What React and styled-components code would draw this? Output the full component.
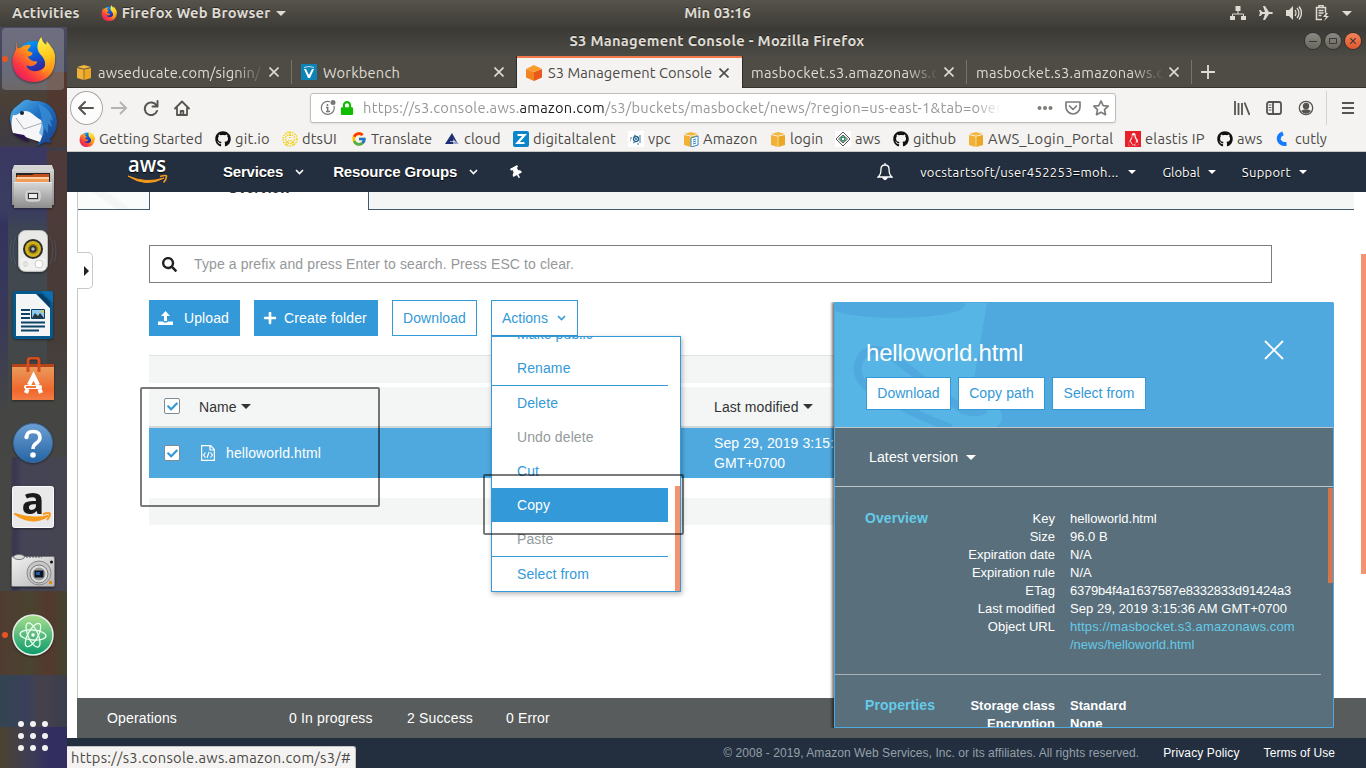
import React from "react";
import styled, { createGlobalStyle, css } from "styled-components";
import {
  FaGithub, FaLock, FaSearch, FaPlus, FaCheck, FaThumbtack, FaLinux,
} from "react-icons/fa";
import { FcGoogle } from "react-icons/fc";

const ubuntu = `Ubuntu, "Noto Sans", "Open Sans", sans-serif`;
const arial = `"Liberation Sans", Arial, sans-serif`;

const Global = createGlobalStyle`
  * { box-sizing: border-box; }
  body { margin: 0; overflow: hidden; font-family: ${arial}; font-size: 14px; }
  svg { display: block; flex: none; }
`;

/* ---------- desktop ---------- */
const Desktop = styled.div`
  width: 1366px; height: 768px; display: flex; flex-direction: column; overflow: hidden;
  background: #fff;
`;
const Panel = styled.header`
  height: 28px; flex: none; display: flex; align-items: flex-start; justify-content: space-between;
  background: linear-gradient(#56534b, #3e3c37);
  color: #dfdbd2; font: bold 14.67px/26px ${ubuntu}; text-shadow: 0 -1px #2b2a27;
`;
const PanelSide = styled.div`
  flex: 1; display: flex; align-items: center; height: 26px; padding-left: 12px; padding-right: 15px;
  justify-content: ${(p) => (p.$end ? "flex-end" : "flex-start")};
  gap: ${(p) => (p.$end ? 12 : 21)}px;
  ${(p) => p.$end && css` padding-right: 14px; `}
`;
const Label = styled.span`
  letter-spacing: ${(p) => p.$ls || 0}px; white-space: nowrap;
`;
const Clock = styled(Label)` padding-left: 68px; `;
const AppMenu = styled.div`
  display: flex; align-items: center; gap: 5px;
`;
const Below = styled.div` flex: 1; min-height: 0; display: flex; `;

const Dock = styled.nav`
  width: 67px; flex: none; display: flex; flex-direction: column; margin-top: -1px; padding-right: 1px;
  background:
    linear-gradient(#3a3862, #3a3d60 80%, transparent) 0 120px / 47px 80px no-repeat,
    linear-gradient(#54382f, #4b3a34) 47px 45px / 20px 75px no-repeat,
    linear-gradient(#4f3a3a, #463c38 70%, #454643) 47px 124px / 20px 260px no-repeat,
    linear-gradient(#33325f, #38395a, #454643) 0 184px / 8px 206px no-repeat,
    linear-gradient(90deg, #464744 10px, #37364f 14px, #444457 22px, #45444f) 0 430px / 67px 134px no-repeat,
    linear-gradient(90deg, #503c31, #4a4330 30px, #54382e 48px, #444430) 0 564px / 67px 84px no-repeat,
    linear-gradient(90deg, #334450, #39405a 26px, #45414c 40px, #3a3e4c) 0 648px / 67px 52px no-repeat,
    linear-gradient(90deg, #4b4331, #3f3d54 30px, #322e60 50px) 0 700px / 67px 41px no-repeat,
    linear-gradient(#4a4a62 0, #43465b 45px, #4b4035 70px, #403c45 115px, #383f5b 150px, #414850 235px, #454643 390px);
`;
const DockItem = styled.div`
  height: 64px; flex: none; display: flex; align-items: center; justify-content: center; position: relative;
  ${(p) => p.$active && css`
    &::before { content: ""; position: absolute; inset: 1px 2px 1px 2px; border-radius: 4px; background: rgba(205,205,205,.28); }
  `}
  ${(p) => p.$running && css`
    &::after { content: ""; position: absolute; left: 2px; top: 29px; width: 6px; height: 6px; border-radius: 50%; background: #e95420; }
  `}
  svg { filter: drop-shadow(0 1px 1px rgba(0,0,0,.45)); z-index: 1; }
`;
const AppsGrid = styled.div`
  margin: auto 0 17px 18px; display: grid; grid-template-columns: repeat(3, 6px); gap: 6px;
  i { width: 6px; height: 6px; border-radius: 50%; background: #f2f2f2; }
`;

/* ---------- browser window ---------- */
const Window = styled.section`
  flex: 1; min-width: 0; display: flex; flex-direction: column; position: relative;
`;
const TitleBar = styled.div`
  height: 28px; flex: none; display: flex; align-items: center; justify-content: flex-end;
  background: linear-gradient(#3b3a36, #4c4a43);
  color: #dfdbd2; font: bold 14.67px/26px ${ubuntu}; text-shadow: 0 -1px #222;
`;
const WindowTitle = styled.div` flex: 1; text-align: center; padding: 0 0 2px 62px; `;
const WindowButtons = styled.div` display: flex; gap: 4px; padding: 0 5px 2px 0; `;
const WindowButton = styled.span`
  width: 16px; height: 16px; border-radius: 50%; display: grid; place-items: center;
  background: ${(p) => (p.$close ? "linear-gradient(#f4825a, #e2562c)" : "linear-gradient(#8b8982, #68665f)")};
  box-shadow: 0 0 0 1px #33322e; color: #3b3934;
`;
const TabStrip = styled.div`
  height: 32px; flex: none; display: flex; background: #4f4c45; color: #dfdbd2;
  box-shadow: inset 0 -1px #33322e; font: 14.67px/31px ${ubuntu};
`;
const Tab = styled.div`
  width: 225px; flex: none; display: flex; align-items: center; position: relative; padding: 0 13px 0 9px;
  ${(p) => p.$rule && css`
    &::after { content: ""; position: absolute; right: 0; top: 4px; width: 1px; height: 24px; background: #77746c; }
  `}
  ${(p) => p.$active && css`
    background: #f4f3f2; color: #4c4a45; border-top: 2px solid #f1784a; box-shadow: -1px 0 #2e2d29, 1px 0 #2e2d29;
    line-height: 26px; padding-bottom: 1px;
  `}
`;
const TabText = styled.span`
  flex: 1; min-width: 0; overflow: hidden; white-space: nowrap; margin-left: ${(p) => (p.$bare ? 0 : 6)}px; margin-right: 5px;
  letter-spacing: ${(p) => p.$ls || 0}px;
  ${(p) => p.$fade && css` mask-image: linear-gradient(90deg, #000 83%, transparent); `}
`;
const NewTab = styled.div` padding: 9px 0 0 9px; `;

const Toolbar = styled.div`
  height: 39px; flex: none; display: flex; align-items: center; padding-left: 3px; background: #f4f3f2; color: #56544f;
`;
const BackButton = styled.span`
  width: 34px; height: 34px; border: 1px solid #a9a7a4; border-radius: 50%; background: #fcfcfc;
  display: grid; place-items: center; margin-right: 8px; padding-right: 1px;
`;
const NavIcons = styled.div` display: flex; gap: 15px; width: 199px; flex: none; `;
const UrlBar = styled.div`
  width: 806px; height: 30px; flex: none; display: flex; align-items: center; padding-left: 9px; background: #fff;
  border: 1px solid #c0bebb; border-radius: 3px; box-shadow: 0 1px 2px rgba(0,0,0,.08);
  font: 14.67px/28px ${ubuntu}; color: #979797;
  b { font-weight: 400; color: #1c1c1c; }
`;
const UrlIcons = styled.div` display: flex; align-items: center; gap: 4px; width: 43px; flex: none; `;
const UrlText = styled.div`
  width: 638px; flex: none; overflow: hidden; white-space: nowrap; letter-spacing: ${(p) => p.$ls}px;
  mask-image: linear-gradient(90deg, #000 96%, transparent);
`;
const UrlActions = styled.div` display: flex; gap: 12px; align-items: center; margin-left: 36px; color: #7d7c79; `;
const ToolIcons = styled.div`
  display: flex; gap: 16px; align-items: center; margin-left: 118px; height: 34px; padding-right: 12px; border-right: 1px solid #d5d3d0;
`;
const Bookmarks = styled.div`
  height: 25px; flex: none; display: flex; padding: 0 0 0 12px; background: #f4f3f2; border-bottom: 1px solid #c9c7c4;
  font: 14.67px/24px ${ubuntu}; color: #4c4a45;
`;
const Bookmark = styled.div`
  width: ${(p) => p.$w}px; flex: none; display: flex; align-items: center; gap: 4px; letter-spacing: ${(p) => p.$ls || 0}px;
  white-space: nowrap;
`;

/* ---------- AWS console ---------- */
const AwsNav = styled.nav`
  height: 40px; flex: none; display: flex; align-items: center; background: #232f3e; color: #fff;
  padding: 0 59px 0 60px; text-shadow: 0 1px 1px #000;
`;
const AwsLink = styled.span`
  display: flex; align-items: center; white-space: nowrap; gap: ${(p) => p.$gap || 12}px; margin-left: ${(p) => p.$ml}px;
  font: ${(p) => (p.$small ? `13px/42px ${ubuntu}` : `bold 15px/40px ${arial}`)}; letter-spacing: ${(p) => p.$ls || 0}px;
`;
const Account = styled(AwsLink)` margin-left: auto; `;
const Pin = styled(FaThumbtack)` transform: rotate(-28deg); `;
const Caret = styled.i`
  width: 0; height: 0; border: ${(p) => p.$s || 4}px solid transparent; border-top-color: currentColor; border-bottom: 0; flex: none;
`;
const Main = styled.main`
  height: 506px; flex: none; margin-left: 10px; border-left: 1px solid #c5c9c9; position: relative; background: #fff;
`;
const ConsoleTabs = styled.div` height: 18px; display: flex; margin-right: 12px; `;
const TabFiller = styled.div`
  width: ${(p) => (p.$w ? p.$w + "px" : "auto")}; flex: ${(p) => (p.$w ? "none" : 1)};
  background: ${(p) => (p.$w ? "linear-gradient(35deg, #fafbfb 40%, #f4f6f6 41%, #f4f6f6 55%, #fafbfb 56%)" : "#f4f6f6")};
  border-bottom: 1px solid #44596b;
`;
const ActiveTab = styled.div`
  width: 220px; overflow: hidden; text-align: center; font: bold 14px/16px ${arial}; color: #333;
  border: 1px solid #44596b; border-width: 0 1px; letter-spacing: .1px;
  span { display: block; margin-top: -12px; }
`;
const Drawer = styled.div`
  position: absolute; left: -1px; top: 60px; width: 16px; height: 37px; background: #fff;
  border: 1px solid #c5c9c9; border-left: 0; border-radius: 0 5px 5px 0; display: flex; align-items: center; padding-left: 7px;
  &::before { content: ""; border: 5px solid transparent; border-left: 5px solid #222; border-right: 0; }
`;
const Browser = styled.div` width: 1123px; margin: 35px 0 0 71px; `;
const Search = styled.div`
  height: 38px; border: 1px solid #7b7d7d; display: flex; align-items: center; gap: 17px; padding-left: 12px;
  color: #95989a; font-size: 14px; letter-spacing: .11px;
  svg { color: #222; }
`;
const Actions = styled.div` display: flex; gap: 14px; margin-top: 17px; `;
const Button = styled.div`
  height: ${(p) => p.$h || 36}px; width: ${(p) => p.$w}px; display: flex; align-items: center; white-space: nowrap; position: relative;
  border: 1px solid #3399d8; font-size: 14px; letter-spacing: ${(p) => p.$ls || 0}px; line-height: 16px;
  padding-left: ${(p) => p.$pl || 0}px; gap: ${(p) => p.$gap || 0}px; justify-content: ${(p) => (p.$pl ? "flex-start" : "center")};
  padding-bottom: ${(p) => (p.$h ? 2 : 0)}px;
  background: ${(p) => (p.$primary ? "#3399d8" : "#fff")}; color: ${(p) => (p.$primary ? "#fff" : "#3399d8")};
`;
const Menu = styled.div`
  position: absolute; left: -1px; top: 35px; width: 190px; height: 256px; overflow: hidden; z-index: 3;
  background: #fff; border: 1px solid #3399d8; box-shadow: 1px 2px 5px rgba(0,0,0,.3);
  &::after { content: ""; position: absolute; right: 0; bottom: 0; width: 5px; height: 105px; background: #f4936f; }
`;
const MenuList = styled.div` width: 176px; margin-top: -20px; `;
const MenuItem = styled.div`
  height: 34px; line-height: 34px; padding-left: 25px; letter-spacing: .1px;
  color: ${(p) => (p.$off ? "#949a9c" : p.$on ? "#fff" : "#3399d8")};
  background: ${(p) => (p.$on ? "#3399d8" : "transparent")};
`;
const MenuRule = styled.div` height: 1px; background: #3399d8; `;
const Band = styled.div`
  height: ${(p) => p.$h}px; margin-top: ${(p) => p.$mt}px; background: #f4f6f6; border-top: ${(p) => (p.$line ? "1px solid #dfe3e3" : 0)};
`;
const Row = styled.div`
  display: grid; grid-template-columns: 35px 515px 1fr; align-items: center; padding-left: 15px;
  ${(p) => p.$head
    ? css` height: 41px; margin-top: 4px; background: #f4f6f6; border-bottom: 2px solid #d3d8d8; color: #333; `
    : css` height: 50px; background: #4fa9de; color: #fff; line-height: 20px; `}
`;
const Cell = styled.div` display: flex; align-items: center; gap: ${(p) => p.$gap || 4}px; letter-spacing: .1px; padding-left: ${(p) => p.$pl || 0}px; `;
const Check = styled.span`
  width: 16px; height: 16px; background: #fff; border: 1px solid #7f8b93; border-radius: 2px; display: grid; place-items: center; color: #3399d8;
  margin-top: ${(p) => p.$up || 0}px;
`;
const Operations = styled.div`
  height: 40px; flex: none; margin-left: 10px; background: #585c5c; color: #fff; display: flex; align-items: center;
  font-size: 14px; padding-left: 30px; letter-spacing: .15px;
  span { white-space: nowrap; }
  span:nth-child(1) { width: 182px; } span:nth-child(2) { width: 118px; } span:nth-child(3) { width: 99px; }
`;
const Footer = styled.footer`
  height: 30px; flex: none; background: #232f3e; display: flex; align-items: center; justify-content: flex-end; gap: 24px;
  padding: 0 31px 0 31px; color: #95a0aa; font-size: 12px; letter-spacing: .06px;
  b { font-weight: 400; color: #fff; }
  b:nth-of-type(1) { letter-spacing: .12px; }
`;
const FooterIcons = styled.div` margin-right: auto; display: flex; gap: 100px; padding-top: 1px; `;
const StatusTip = styled.div`
  position: absolute; left: 0; bottom: 0; height: 22px; width: 289px; padding-left: 4px; background: #f4f3f2; white-space: nowrap;
  border: 1px solid #c5c3c0; border-width: 1px 1px 0 0; border-radius: 0 3px 0 0; font: 14.67px/22px ${ubuntu}; color: #4c4a45; letter-spacing: ${(p) => p.$ls}px;
`;
const PageThumb = styled.div` position: absolute; right: 0; top: 226px; width: 5px; height: 320px; background: #f4936f; `;

/* ---------- details panel ---------- */
const Details = styled.aside`
  position: absolute; left: 767px; top: 274px; width: 500px; height: 426px; z-index: 4;
  border: 1px solid #4fa9de; border-radius: 0 2px 0 0; background: #596f7c; color: #fff; box-shadow: -1px 1px 3px 1px rgba(0,0,0,.55);
  clip-path: inset(0 0 0 -6px);
`;
const DetailsHead = styled.div`
  height: 125px; padding: 37px 49px 0 31px; background: #4fa9de; border-bottom: 1px solid #bfc5c8; position: relative; overflow: hidden;
`;
const Bucket = styled.svg` position: absolute; left: 0; top: 0; `;
const TitleLine = styled.div`
  position: relative; display: flex; justify-content: space-between; font-size: 24px; line-height: 26px; height: 37px; letter-spacing: -.2px;
`;
const HeadButtons = styled.div` position: relative; display: flex; gap: 7px; `;
const Version = styled.div`
  height: 59px; border-bottom: 1px solid #bfc5c8; display: flex; align-items: center; gap: 8px; padding-left: 34px; font-size: 14px; letter-spacing: .14px;
`;
const DetailsBody = styled.div`
  height: 240px; overflow: hidden; position: relative; padding-right: 12px;
  &::after { content: ""; position: absolute; right: 0; top: 1px; width: 5px; height: 95px; background: #d3754e; }
`;
const Section = styled.div`
  display: grid; grid-template-columns: 190px 1fr; column-gap: 15px; padding: ${(p) => (p.$bold ? 22 : 23)}px 0 0 30px; height: ${(p) => p.$h}px;
  border-bottom: 1px solid #aab2b5; font: ${(p) => (p.$bold ? "bold " : "")}13px/18px ${arial};
`;
const SectionTitle = styled.h3`
  margin: -1px 0 0; font: bold 14px/18px ${arial}; color: #63cbe8; letter-spacing: .08px; grid-column: 1; grid-row: 1;
`;
const Keys = styled.div` grid-column: 1; grid-row: 1; text-align: right; `;
const Value = styled.div` white-space: nowrap; letter-spacing: ${(p) => p.$ls || 0}px; color: ${(p) => (p.$link ? "#63cbe8" : "inherit")}; `;

const Annotation = styled.div`
  position: absolute; left: ${(p) => p.$x}px; top: ${(p) => p.$y}px; width: ${(p) => p.$w}px; height: ${(p) => p.$h}px;
  border: 2px solid rgba(0,0,0,.52); border-radius: 2px; z-index: 10;
`;

/* ---------- drawings ---------- */
const Firefox = ({ size = 16 }) => {
  const id = React.useId();
  return (
    <svg width={size} height={size} viewBox="0 0 46 46">
      <defs>
        <linearGradient id={id + "a"} x1="1" y1="0" x2=".1" y2="1"><stop offset="0" stopColor="#ffd83b" /><stop offset=".45" stopColor="#ff9417" /><stop offset=".75" stopColor="#fb3643" /><stop offset="1" stopColor="#e0126e" /></linearGradient>
        <linearGradient id={id + "b"} x1="0" y1="0" x2=".4" y2="1"><stop offset="0" stopColor="#00aeff" /><stop offset=".5" stopColor="#0a62df" /><stop offset="1" stopColor="#33229a" /></linearGradient>
        <linearGradient id={id + "c"} x1=".3" y1="0" x2=".5" y2="1"><stop offset="0" stopColor="#fff44b" /><stop offset=".6" stopColor="#ffc41d" /><stop offset="1" stopColor="#ff8a16" /></linearGradient>
      </defs>
      <circle cx="23" cy="21" r="17" fill={`url(#${id}b)`} />
      <path d="M6 5c-1 4 0 6-2 10C-2 26 3 46 23 46c14 0 22-10 22-23-1-7-4-10-7-13 2 9 0 17-5 22-4 3-9 4-13 2-3-1-4-3-4-5 4 2 8 0 10-2 1-1 0-3-1-2-4 0-6-2-8-5 3 0 5-2 5-4l-5-2c0-2 3-3 3-6-6 0-8 1-10 3-1 0-2 0-3 1-1-2-1-4-1-7z" fill={`url(#${id}a)`} />
      <path d="M31 0c-6 8-5 14 1 20 4 5 4 11-1 17 10-4 15-12 14-18-1-7-4-8-6-12-1-1-2-2-2-3-1 2-1 3-1 4-3-2-4-4-5-8z" fill={`url(#${id}c)`} />
    </svg>
  );
};
const Thunderbird = () => (
  <svg width="50" height="50" viewBox="0 0 50 50">
    <defs><linearGradient id="tb" x1="0" y1="0" x2="1" y2="1"><stop offset="0" stopColor="#58b7ec" /><stop offset=".45" stopColor="#1f6fc4" /><stop offset="1" stopColor="#183f86" /></linearGradient></defs>
    <path d="M15 3c5-3 8 0 11 0 14-1 23 9 23 21 0 7-3 13-7 17l1 4-6-1-8 4 3-8L6 32C0 24 1 13 9 8c3-2 4-4 6-5z" fill="url(#tb)" />
    <path d="M5 17c5 1 8-4 12-4 6 0 9 5 16 9 4 8 2 15-1 22L5 35c-2-5-2-12 0-18z" fill="#f6f6f8" />
    <path d="m8 20 8 11 18-6" stroke="#a9a9b4" strokeWidth="1" fill="none" />
    <path d="M30 6c8 2 14 9 15 17l-3-2 2 8-4-3 0 9-4-5-1 9-4-4c4-9 3-18-1-29z" fill="#3f95dc" opacity=".65" />
    <path d="M5 35c5 5 10 7 17 9l-6-7z" fill="#2a164d" /><circle cx="14" cy="15" r="2" fill="#123" />
  </svg>
);
const Cabinet = () => (
  <svg width="42" height="46" viewBox="0 0 42 46">
    <defs><linearGradient id="cb" x1="0" y1="0" x2="0" y2="1"><stop offset="0" stopColor="#d8d8d8" /><stop offset="1" stopColor="#8d8d8d" /></linearGradient></defs>
    <path d="M2 1h38l2 6v34H0V7z" fill="url(#cb)" /><path d="M0 6h42" stroke="#ddd" />
    <path d="M4 9h34v10H4z" fill="#262626" /><path d="m5 11 15 0 2-1h15v9H5z" fill="#c3511d" /><path d="M4 13h33v6H4z" fill="#f09b57" /><path d="M5 14h32" stroke="#ffe7c9" strokeWidth="1.4" />
    <path d="M2 18h38v26H2z" fill="url(#cb)" /><path d="M2 18.500h38" stroke="#e9e9e9" />
    <rect x="14" y="27" width="14" height="10" rx="2.500" fill="#bcbcbc" stroke="#e6e6e6" /><rect x="16.500" y="29.500" width="9" height="5" fill="#eee" stroke="#333" />
  </svg>
);
const Speaker = () => (
  <svg width="48" height="46" viewBox="0 0 48 46">
    <path d="M7 9q-6 12 0 28M3 12q-4 10 0 22M41 9q6 12 0 28M45 12q4 10 0 22" stroke="#64758d" opacity=".4" fill="none" />
    <rect x="9.500" y="2.500" width="29" height="41" rx="7" fill="#e9e9e7" stroke="#bdbdbb" /><path d="M11 30h26l-1 12H12z" fill="#f7f7f7" opacity=".6" />
    <circle cx="24" cy="21" r="10" fill="#2c2c2c" /><circle cx="24" cy="21" r="8" fill="#d2b11f" /><circle cx="24" cy="21" r="5" fill="#917811" /><circle cx="24" cy="21" r="3.500" fill="#333" /><circle cx="24" cy="21" r="1.700" fill="#bbb" />
    <circle cx="30" cy="36" r="4" fill="#fff" stroke="#ccc" /><path d="M15 34h3v4h-3z" fill="none" stroke="#ccc" />
  </svg>
);
const Writer = () => (
  <svg width="40" height="48" viewBox="0 0 40 48">
    <path d="M3 0h37v45q0 3-3 3H3q-3 0-3-3V3q0-3 3-3z" fill="#04598f" /><path d="M28 0h9q3 0 3 3v9z" fill="#0b6dae" />
    <path d="M3 3h20l14 14v28H3z" fill="#f4f5f6" /><path d="M24 3l13 14V11L29 3z" fill="#083e66" />
    <path d="M8 19h9M8 23h9M8 27h9M8 31.500h24M8 35.500h24M8 39.500h18" stroke="#0c4266" strokeWidth="2" />
    <path d="M18.500 18.500h13v9h-13z" fill="#8fc9ee" stroke="#0c4266" /><path d="m19 27 3-5 3 3 2-3 4 5z" fill="#263743" /><circle cx="29.500" cy="20.500" r="1.500" fill="#e8c33e" />
  </svg>
);
const Store = () => (
  <svg width="42" height="44" viewBox="0 0 42 44">
    <defs><linearGradient id="st" x1="0" y1="0" x2="0" y2="1"><stop offset="0" stopColor="#e99a5b" /><stop offset=".7" stopColor="#f1672c" /><stop offset="1" stopColor="#f37d45" /></linearGradient></defs>
    <path d="M0 7h42v4H0z" fill="#b7431a" /><path d="M0 10h42v33H0z" fill="url(#st)" />
    <path d="M16 15V4q0-3 3-3h5q3 0 3 3v11" fill="none" stroke="#d64c1c" strokeWidth="3" />
    <path d="m14 36 1.500-4M29 36l-1.500-4M17 28l4.500-9L26 28" fill="none" stroke="#fff" strokeWidth="4.200" /><rect x="12" y="28" width="18" height="4" rx="2" fill="#fff" /><path d="M14 30h10" stroke="#f1672c" strokeWidth="1.800" />
  </svg>
);
const Help = () => (
  <svg width="42" height="42" viewBox="0 0 42 42">
    <defs><linearGradient id="hp" x1="0" y1="0" x2="0" y2="1"><stop offset="0" stopColor="#6d9fd4" /><stop offset="1" stopColor="#2565a4" /></linearGradient></defs>
    <circle cx="21" cy="21" r="19.500" fill="url(#hp)" stroke="#3b6ea3" /><path d="M14.500 15.500q0-6 6.500-6 7 0 7 6 0 3-3.500 5.500T21 27" fill="none" stroke="#fff" strokeWidth="3.500" /><circle cx="14.500" cy="15" r="2.200" fill="#fff" /><circle cx="21" cy="33" r="2.800" fill="#fff" />
  </svg>
);
const Amazon = () => (
  <svg width="42" height="42" viewBox="0 0 42 42">
    <rect x=".5" y=".5" width="41" height="41" rx="2" fill="#e9e9e9" stroke="#fafafa" />
    <text x="21" y="28" textAnchor="middle" fontFamily="Open Sans, sans-serif" fontWeight="700" fontSize="38" fill="#1b1b1b">a</text>
    <path d="M3 28q17 12 33 2-15 4-33-2z" fill="#f79a1c" stroke="#f79a1c" strokeWidth="2" strokeLinejoin="round" /><path d="M31 28q7-2 7 0 0 3-3 6" fill="none" stroke="#f79a1c" strokeWidth="2" />
  </svg>
);
const Camera = () => (
  <svg width="44" height="34" viewBox="0 0 44 34">
    <defs><linearGradient id="cm" x1="0" y1="0" x2="1" y2="1"><stop offset="0" stopColor="#f2f2f2" /><stop offset="1" stopColor="#b4b4b4" /></linearGradient></defs>
    <rect x=".5" y="2.500" width="43" height="30" rx="1.500" fill="url(#cm)" stroke="#777" /><ellipse cx="8" cy="3" rx="5.500" ry="2.500" fill="#ddd" stroke="#777" /><path d="M15 3h16" stroke="#555" strokeDasharray="2 1" />
    <circle cx="28" cy="19" r="12" fill="#c7c7c7" stroke="#888" /><circle cx="28" cy="20" r="9" fill="#ddd" stroke="#777" /><circle cx="28" cy="20" r="6.500" fill="#999" /><rect x="23.500" y="16.500" width="9" height="7" fill="#0b1526" /><path d="M25 18h4v3h-4z" fill="#1d5ba4" />
    <circle cx="40.500" cy="8" r="1.500" fill="#111" /><path d="M38 27h3v3h-3z" fill="#e28a14" />
  </svg>
);
const Atom = () => (
  <svg width="42" height="42" viewBox="0 0 42 42">
    <defs><linearGradient id="at" x1="0" y1="0" x2="0" y2="1"><stop offset="0" stopColor="#a9de8d" /><stop offset="1" stopColor="#0a9a6c" /></linearGradient></defs>
    <circle cx="21" cy="21" r="20" fill="url(#at)" stroke="#e3efe6" strokeWidth="1.600" />
    <g fill="none" stroke="#eafff0" strokeWidth="1.300"><ellipse cx="21" cy="21" rx="13" ry="5" transform="rotate(5 21 21)" /><ellipse cx="21" cy="21" rx="13" ry="5" transform="rotate(66 21 21)" /><ellipse cx="21" cy="21" rx="13" ry="5" transform="rotate(119 21 21)" /></g><circle cx="21" cy="21" r="1.700" fill="#fff" />
  </svg>
);
const Cube = ({ page }) => (
  <svg width="16" height="16" viewBox="0 0 16 16">
    <path d="M1 4l6.700 1.500V16L1 14z" fill="#f2b035" /><path d="m15 4-6.700 1.500V16l6.700-2z" fill="#eca723" /><path d="m1 3 7-2 7 2-7 1.700z" fill="#f4b840" />
    {page && <><path d="M8 7l7-2v9l-7 2z" fill="#fff" stroke="#2f86c4" /><path d="m10 9 3-1M10 11l3-1M10 13l3-1" stroke="#2f86c4" /></>}
  </svg>
);
const S3Cube = () => (
  <svg width="16" height="16" viewBox="0 0 16 16"><path d="M0 4l8 3v9l-8-3.500z" fill="#f58220" /><path d="m16 4-8 3v9l8-3.500z" fill="#e8591c" /><path d="m0 4 8-4 8 4-8 3z" fill="#fb9b2b" /></svg>
);
const Workbench = () => (
  <svg width="16" height="16" viewBox="0 0 16 16"><path d="M0 0h16v16H0z" fill="#0d84b5" /><path d="m3 5 2 0 3 6 3-6h2l-4 9H7z" fill="#fff" /><path d="M3 3.500q5-2 10 0" stroke="#bfe3f2" fill="none" /></svg>
);
const Dots = () => (
  <svg width="16" height="16" viewBox="0 0 16 16" fill="none" stroke="#f2d21c" strokeDasharray="1.500 1"><circle cx="8" cy="8" r="7" strokeWidth="1.500" /><circle cx="8" cy="8" r="4.500" strokeWidth="1.500" /><path d="M8 1v6M4 14l3-5M12 14 9 9" strokeWidth="2" /></svg>
);
const Cloud = () => (
  <svg width="16" height="16" viewBox="0 0 16 16"><path d="M1 13 8 2l6 11z" fill="#1d2f70" /><path d="M9 8l6 5H9z" fill="#9aa5cc" /><path d="M6 10h5v1H6z" fill="#fff" opacity=".6" /></svg>
);
const Zed = () => (
  <svg width="16" height="16" viewBox="0 0 16 16"><rect width="16" height="16" rx="2" fill="#0b86c8" /><path d="M4.500 4h7l-7 8h7" fill="none" stroke="#fff" strokeWidth="2.200" /></svg>
);
const Vpc = () => (
  <svg width="16" height="16" viewBox="0 0 16 16"><path d="M0 0h16v16H0z" fill="#fff" /><circle cx="8" cy="8" r="2.500" fill="none" stroke="#1f5f86" strokeWidth="1.300" /><circle cx="8" cy="8" r="1" fill="#1f5f86" /><path d="M2 7h2M2 9h1M12 4v8M5 12l2-1M6 4l2 1M10 12v2" stroke="#3a7da3" /></svg>
);
const Diamond = () => (
  <svg width="16" height="16" viewBox="0 0 16 16"><path d="M0 0h16v16H0z" fill="#fff" /><path d="m8 1 7 7-7 7-7-7zM8 4l4.500 4L8 12 3.500 8z" fill="none" stroke="#555" /><circle cx="8" cy="8" r="2" fill="none" stroke="#2b8a5b" strokeWidth="1.500" /></svg>
);
const Tux = styled.span` width: 16px; height: 16px; flex: none; background: #e7202b; color: #fff; display: grid; place-items: center; `;
const Cutly = () => (
  <svg width="16" height="16" viewBox="0 0 16 16"><path d="M8 2.300Q3.500 4 3.800 8.200 4.500 13.300 11.500 13" fill="none" stroke="#147aff" strokeWidth="4" /></svg>
);
const X = ({ s = 10, w = 1.6, c = "currentColor" }) => (
  <svg width={s} height={s} viewBox="0 0 10 10"><path d="m.5.5 9 9m0-9-9 9" stroke={c} strokeWidth={w} /></svg>
);
const Chevron = () => (
  <svg width="9" height="6" viewBox="0 0 9 6"><path d="m1 1 3.500 3.500L8 1" fill="none" stroke="currentColor" strokeWidth="1.600" /></svg>
);
const AwsLogo = () => (
  <svg width="42" height="28" viewBox="0 0 42 28">
    <text x="1" y="14" fontFamily="Open Sans, sans-serif" fontWeight="600" fontSize="21" fill="#fff" textLength="38" lengthAdjust="spacingAndGlyphs">aws</text>
    <path d="M1 18q18 12 36 2-18 6-36-2z" fill="#f79a1c" stroke="#f79a1c" strokeLinejoin="round" /><path d="M33 18.500q7-2 6.500 0 0 3-3 6" fill="none" stroke="#f79a1c" strokeWidth="1.600" />
  </svg>
);
const Glyph = ({ children, w = 16, sw = 2 }) => (
  <svg width={w} height={w} viewBox="0 0 16 16" fill="none" stroke="currentColor" strokeWidth={sw} strokeLinecap="round" strokeLinejoin="round">{children}</svg>
);

const bookmarks = [
  ["Getting Started", 136, <Firefox />, 0.12], ["git.io", 67, <FaGithub size={16} color="#111" />, 0.2], ["dtsUI", 69, <Dots />, 0.1],
  ["Translate", 93, <FcGoogle size={16} />, 0.06], ["cloud", 69, <Cloud />, 0.1], ["digitaltalent", 115, <Zed />, 0.18], ["vpc", 55, <Vpc />, 0],
  ["Amazon", 87, <Cube page />, 0.2], ["login", 65, <Cube />, 0.1], ["aws", 58, <Diamond />, 0], ["github", 75, <FaGithub size={16} color="#111" />, 0],
  ["AWS_Login_Portal", 157, <Cube />, 0.26], ["elastis IP", 92, <Tux><FaLinux size={13} /></Tux>, 0.24], ["aws", 58, <FaGithub size={16} color="#111" />, 0], ["cutly", 60, <Cutly />, 0],
];

export default function App() {
  return (
    <Desktop>
      <Global />
      <Panel>
        <PanelSide>
          <Label $ls={0.25}>Activities</Label>
          <AppMenu><Firefox /><Label $ls={0.26}>Firefox Web Browser</Label><Caret $s={5} /></AppMenu>
        </PanelSide>
        <Clock $ls={0.1}>Min 03:16</Clock>
        <PanelSide $end>
          <svg width="16" height="16" viewBox="0 0 16 16" fill="#dfdbd2"><path d="M5.500 1h5v5h-5zM0 11h5v4H0zM11 11h5v4h-5z" /><path d="M8 6v3M2.500 11V9h11v2" fill="none" stroke="#dfdbd2" /></svg>
          <svg width="16" height="16" viewBox="0 0 16 16" fill="#dfdbd2"><path d="M1 5h1.500l2 2H7L5 1h2l4 6h3q2 1 0 2h-3l-4 6H5l2-6H4.500l-2 2H1l1-3z" /></svg>
          <svg width="16" height="16" viewBox="0 0 16 16" fill="#dfdbd2"><path d="M0 5h3l4-4v14l-4-4H0z" /><path d="M9 5q2 3 0 6M11 3q4 5 0 10M13 1.500q5 6.500 0 13" fill="none" stroke="#dfdbd2" strokeWidth="1.300" /></svg>
          <svg width="16" height="16" viewBox="0 0 16 16" fill="none" stroke="#dfdbd2"><path d="M8 14.500H2.500v-12h9V8M5 2V.5h4V2M4.500 5.500h5M4.500 8h5M4.500 10.500h3" strokeWidth="1.500" /><path d="m12 8-3 4h3l-2 4 5-5h-3l2-3z" fill="#dfdbd2" stroke="none" /></svg>
          <Caret $s={5} />
        </PanelSide>
      </Panel>
      <Below>
        <Dock>
          <DockItem $active $running><Firefox size={45} /></DockItem>
          <DockItem><Thunderbird /></DockItem>
          <DockItem><Cabinet /></DockItem>
          <DockItem><Speaker /></DockItem>
          <DockItem><Writer /></DockItem>
          <DockItem><Store /></DockItem>
          <DockItem><Help /></DockItem>
          <DockItem><Amazon /></DockItem>
          <DockItem><Camera /></DockItem>
          <DockItem $running><Atom /></DockItem>
          <AppsGrid>{Array.from({ length: 9 }, (_, i) => <i key={i} />)}</AppsGrid>
        </Dock>
        <Window>
          <TitleBar>
            <WindowTitle><Label $ls={0.29}>S3 Management Console - Mozilla Firefox</Label></WindowTitle>
            <WindowButtons>
              <WindowButton><svg width="8" height="8"><path d="M0 4.500h8" stroke="currentColor" /></svg></WindowButton>
              <WindowButton><svg width="8" height="8"><path d="M.5 1.500h7v5h-7z" fill="none" stroke="currentColor" /></svg></WindowButton>
              <WindowButton $close><X s={6} w={2} /></WindowButton>
            </WindowButtons>
          </TitleBar>
          <TabStrip>
            <Tab $rule><Cube /><TabText $fade $ls={0.15}>awseducate.com/signin/</TabText><X /></Tab>
            <Tab><Workbench /><TabText $ls={0.22}>Workbench</TabText><X /></Tab>
            <Tab $active><S3Cube /><TabText $ls={0.05}>S3 Management Console</TabText><X /></Tab>
            <Tab $rule><TabText $bare $fade $ls={0.3}>masbocket.s3.amazonaws.com</TabText><X /></Tab>
            <Tab $rule><TabText $bare $fade $ls={0.3}>masbocket.s3.amazonaws.com</TabText><X /></Tab>
            <NewTab><svg width="14" height="14"><path d="M7 0v14M0 7h14" stroke="#dfdbd2" strokeWidth="1.800" /></svg></NewTab>
          </TabStrip>
          <Toolbar>
            <BackButton><Glyph><path d="M15 8H1.500M7 2 1 8l6 6" /></Glyph></BackButton>
            <NavIcons>
              <svg width="17" height="16" viewBox="0 0 17 16" fill="none" stroke="#b6b4b1" strokeWidth="2"><path d="M0 8h15M9 2l6 6-6 6" /></svg>
              <Glyph><path d="M13.500 5.500A6.300 6.300 0 1 0 14 11M14.500 1v5.500H9.500" /></Glyph>
              <Glyph sw={1.8}><path d="m1 8.500 7-7 7 7M3 8v7h10V8M6.700 15v-4h2.600v4" /></Glyph>
            </NavIcons>
            <UrlBar>
              <UrlIcons>
                <svg width="16" height="16" viewBox="0 0 16 16"><path d="M10 1.800A6.500 6.500 0 1 0 14 6" fill="none" stroke="#777" strokeWidth="1.200" /><circle cx="13" cy="2.500" r="2.500" fill="#777" /><path d="M7.500 4v2M6 7.500h1.700V11M6 11.500h4" stroke="#777" strokeWidth="1.500" fill="none" /></svg>
                <FaLock size={14} color="#12bc00" />
              </UrlIcons>
              <UrlText $ls={0.27}>https://s3.console.aws.<b>amazon.com</b>/s3/buckets/masbocket/news/?region=us-east-1&amp;tab=overview</UrlText>
              <UrlActions>
                <svg width="16" height="16" fill="currentColor"><circle cx="2.500" cy="8" r="2" /><circle cx="8" cy="8" r="2" /><circle cx="13.500" cy="8" r="2" /></svg>
                <Glyph sw={1.7}><path d="M1 2h14v5a7 7 0 0 1-14 0zM4.500 6 8 9.500 11.500 6" /></Glyph>
                <Glyph sw={1.7}><path d="m8 1 2.200 4.600 5 .6-3.700 3.500 1 5L8 12.200 3.500 14.700l1-5L.8 6.200l5-.6z" /></Glyph>
              </UrlActions>
            </UrlBar>
            <ToolIcons>
              <svg width="16" height="16" fill="none" stroke="currentColor" strokeWidth="1.800"><path d="M1 1v14M4.500 3v12M8 3v12M10.500 2.500l5 12.500" /></svg>
              <Glyph sw={1.8}><rect x="1" y="2" width="14" height="12" rx="2" /><path d="M7 2v12" /><path d="M3 5h2M3 7.500h2M3 10h2" strokeWidth="1" /></Glyph>
              <Glyph sw={1.3}><circle cx="8" cy="8" r="6.700" /><circle cx="8" cy="6" r="2.600" fill="currentColor" /><path d="M4 11q4-2 8 0-4 4-8 0z" fill="currentColor" /></Glyph>
            </ToolIcons>
            <svg width="39" height="14" fill="none" stroke="currentColor" strokeWidth="2"><path d="M15 2h12M15 7h12M15 12h12" /></svg>
          </Toolbar>
          <Bookmarks>
            {bookmarks.map(([name, w, icon, ls], i) => <Bookmark key={i} $w={w} $ls={ls}>{icon}{name}</Bookmark>)}
          </Bookmarks>
          <AwsNav>
            <AwsLogo />
            <AwsLink $ml={54} $ls={-0.2}>Services<Chevron /></AwsLink>
            <AwsLink $ml={29} $ls={-0.12}>Resource Groups<Chevron /></AwsLink>
            <AwsLink $ml={32}><Pin size={13} /></AwsLink>
            <Account $small $gap={27} $ls={0.35}>
              <svg width="16" height="18" viewBox="0 0 16 18" fill="none" stroke="#fff" strokeWidth="1.300"><path d="M1 14q3-2 3-8 0-4 4-4t4 4q0 6 3 8zM8 0v2" /><path d="M6 15h4q-2 3-4 0z" fill="#fff" /></svg>
              vocstartsoft/user452253=moh...
            </Account>
            <AwsLink $ml={10} $small><Caret /></AwsLink>
            <AwsLink $ml={26} $small $gap={8}>Global<Caret /></AwsLink>
            <AwsLink $ml={26} $small $gap={8} $ls={0.3}>Support<Caret /></AwsLink>
          </AwsNav>
          <Main>
            <ConsoleTabs><TabFiller $w={71} /><ActiveTab><span>Overview</span></ActiveTab><TabFiller /></ConsoleTabs>
            <Drawer />
            <Browser>
              <Search><FaSearch size={15} />Type a prefix and press Enter to search. Press ESC to clear.</Search>
              <Actions>
                <Button $primary $w={91} $pl={8} $gap={11} $ls={0.1}>
                  <svg width="15" height="15" viewBox="0 0 15 15" fill="#fff"><path d="M7.500 0 12 5H9v5H6V5H3z" /><path d="M0 10.500h5l1 1h3l1-1h5V14H0z" /></svg>Upload
                </Button>
                <Button $primary $w={124} $pl={8} $gap={7} $ls={0.15}><FaPlus size={14} />Create folder</Button>
                <Button $w={85} $ls={0.08}>Download</Button>
                <Button $w={87} $pl={10} $gap={9}>Actions<Chevron />
                  <Menu>
                    <MenuList>
                      <MenuItem>Make public</MenuItem><MenuItem>Rename</MenuItem><MenuRule />
                      <MenuItem>Delete</MenuItem><MenuItem $off>Undo delete</MenuItem><MenuItem>Cut</MenuItem>
                      <MenuItem $on>Copy</MenuItem><MenuItem $off>Paste</MenuItem><MenuRule /><MenuItem>Select from</MenuItem>
                    </MenuList>
                  </Menu>
                </Button>
              </Actions>
              <Band $h={28} $mt={19} $line />
              <Row $head><Check $up={-1}><FaCheck size={11} /></Check><Cell>Name <Caret $s={5} /></Cell><Cell>Last modified <Caret $s={5} /></Cell></Row>
              <Row>
                <Check><FaCheck size={11} /></Check>
                <Cell $gap={10} $pl={1}>
                  <svg width="16" height="16" viewBox="0 0 16 16" fill="none" stroke="#fff" strokeWidth="1.200"><path d="M1.600.6h9l3.800 3.900v10.900H1.600zM10 1v4h4M5.500 7.500l-2 2.500 2 2.500M10.500 7.500l2 2.500-2 2.500M9 7l-2 6" /></svg>
                  helloworld.html
                </Cell>
                <Cell>Sep 29, 2019 3:15:36 AM<br />GMT+0700</Cell>
              </Row>
              <Band $h={27} $mt={20} />
            </Browser>
          </Main>
          <Operations><span>Operations</span><span>0 In progress</span><span>2 Success</span><span>0 Error</span></Operations>
          <Footer>
            <FooterIcons>
              <svg width="13" height="15"><circle cx="6.500" cy="7" r="6" fill="#fff" /></svg>
              <svg width="13" height="15"><circle cx="6.500" cy="7" r="6" fill="#fff" /></svg>
            </FooterIcons>
            <span>© 2008 - 2019, Amazon Web Services, Inc. or its affiliates. All rights reserved.</span>
            <b>Privacy Policy</b><b>Terms of Use</b>
          </Footer>
          <Details>
            <DetailsHead>
              <Bucket width="180" height="125" fill="#57b5e5">
                <path d="M0 0h152l-13 76q22 20 28 36 1 8-7 13H0z" /><ellipse cx="61" cy="2" rx="69" ry="13" fill="#4fa9de" />
                <path d="M150 106q-8 6-22 1L58 54Q37 40 26 54q-9 16 5 29 38 25 85 42" fill="none" stroke="#4fa9de" strokeWidth="8" />
              </Bucket>
              <TitleLine>helloworld.html<X s={20} w={0.9} /></TitleLine>
              <HeadButtons><Button $h={33} $w={85}>Download</Button><Button $h={33} $w={87} $ls={0.1}>Copy path</Button><Button $h={33} $w={94}>Select from</Button></HeadButtons>
            </DetailsHead>
            <Version>Latest version <Caret $s={5} /></Version>
            <DetailsBody>
              <Section $h={188}>
                <SectionTitle>Overview</SectionTitle>
                <Keys>Key<br />Size<br />Expiration date<br />Expiration rule<br />ETag<br />Last modified<br />Object URL</Keys>
                <div>
                  <Value>helloworld.html</Value><Value>96.0 B</Value><Value>N/A</Value><Value>N/A</Value>
                  <Value $ls={-0.21}>6379b4f4a1637587e8332833d91424a3</Value>
                  <Value $ls={0.04}>Sep 29, 2019 3:15:36 AM GMT+0700</Value>
                  <Value $link $ls={0.13}>https://masbocket.s3.amazonaws.com</Value><Value $link>/news/helloworld.html</Value>
                </div>
              </Section>
              <Section $h={90} $bold>
                <SectionTitle>Properties</SectionTitle>
                <Keys>Storage class<br />Encryption</Keys>
                <div><Value>Standard</Value><Value>None</Value></div>
              </Section>
            </DetailsBody>
          </Details>
          <PageThumb />
          <StatusTip $ls={0.31}>https://s3.console.aws.amazon.com/s3/#</StatusTip>
          <Annotation $x={73} $y={359} $w={240} $h={120} />
          <Annotation $x={416} $y={446} $w={201} $h={61} />
        </Window>
      </Below>
    </Desktop>
  );
}
